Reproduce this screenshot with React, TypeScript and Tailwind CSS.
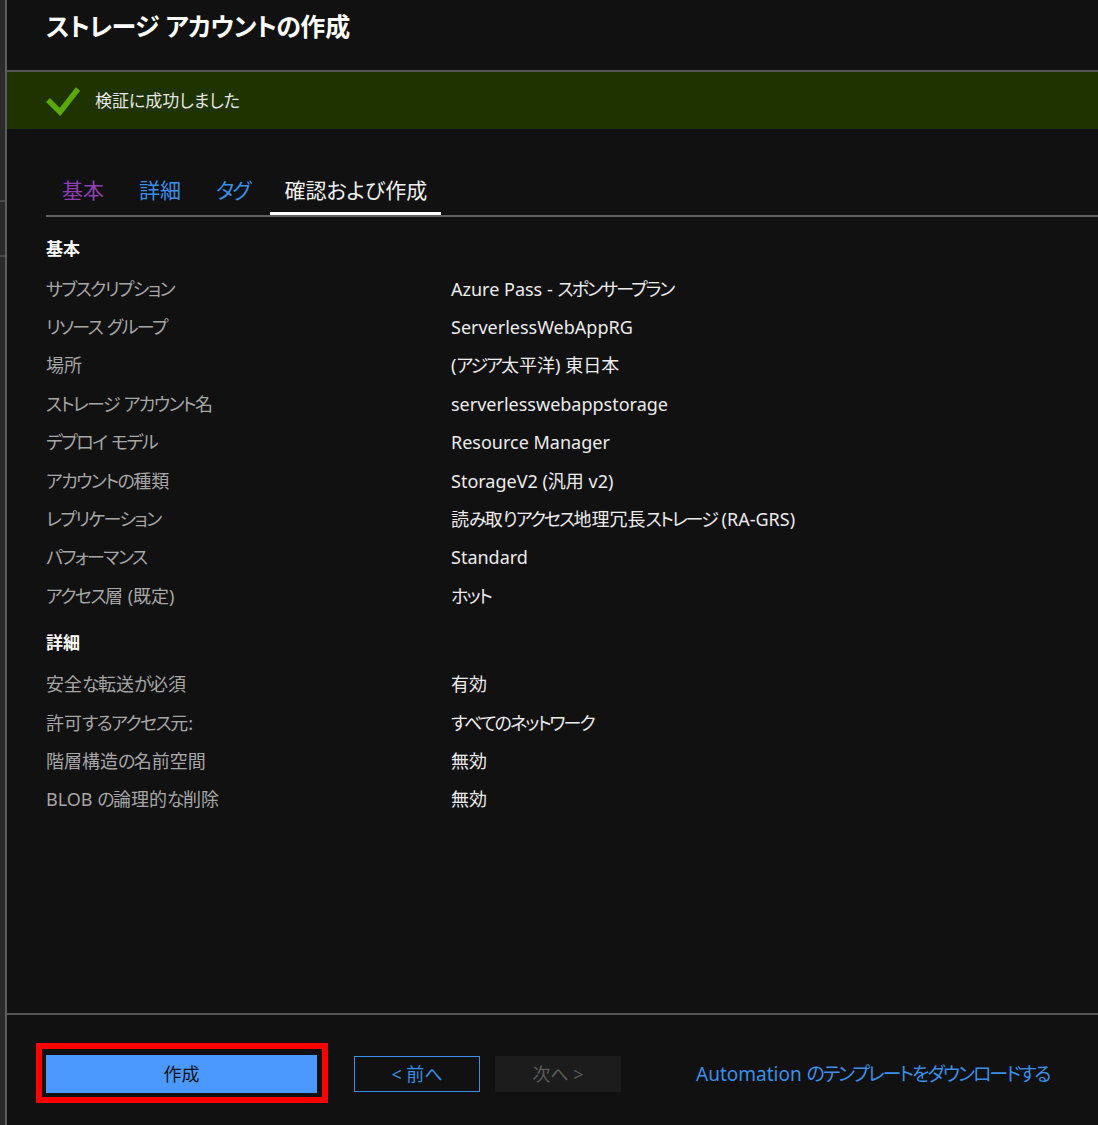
import React from "react";

const basic: [string, string][] = [
  ["サブスクリプション", "Azure Pass - スポンサープラン"],
  ["リソース グループ", "ServerlessWebAppRG"],
  ["場所", "(アジア太平洋) 東日本"],
  ["ストレージ アカウント名", "serverlesswebappstorage"],
  ["デプロイ モデル", "Resource Manager"],
  ["アカウントの種類", "StorageV2 (汎用 v2)"],
  ["レプリケーション", "読み取りアクセス地理冗長ストレージ (RA-GRS)"],
  ["パフォーマンス", "Standard"],
  ["アクセス層 (既定)", "ホット"],
];

const details: [string, string][] = [
  ["安全な転送が必須", "有効"],
  ["許可するアクセス元:", "すべてのネットワーク"],
  ["階層構造の名前空間", "無効"],
  ["BLOB の論理的な削除", "無効"],
];

function Kana({ text, cls }: { text: string; cls: string }) {
  const parts = text.split(/([\u3040-\u30ff]+)/);
  return (
    <>
      {parts.map((p, i) =>
        /[\u3040-\u30ff]/.test(p) ? (
          <span key={i} className={cls}>
            {p}
          </span>
        ) : (
          <React.Fragment key={i}>{p}</React.Fragment>
        )
      )}
    </>
  );
}

function Rows({ rows }: { rows: [string, string][] }) {
  return (
    <div className="flex flex-col">
      {rows.map(([k, v]) => (
        <div key={k} className="grid h-[38.4px] grid-cols-[405px_1fr] items-center text-[18px]">
          <div className="text-[#a6a6a6]">
            <Kana text={k} cls="tracking-[-1.6px]" />
          </div>
          <div className="text-[#ececec]">
            <Kana text={v} cls="tracking-[-1.9px]" />
          </div>
        </div>
      ))}
    </div>
  );
}

export default function App() {
  return (
    <div className="flex h-[1125px] w-[1098px] overflow-hidden bg-[#111111] font-['Noto_Sans','Noto_Sans_CJK_JP',sans-serif] [font-feature-settings:'palt']">
      {/* left strip */}
      <div className="flex w-[5px] shrink-0 flex-col bg-[#2a2a2a]">
        <div className="h-[200px]" />
        <div className="h-[2px] bg-[#4a4a4a]" />
        <div className="h-[53px]" />
        <div className="h-[2px] bg-[#4a4a4a]" />
      </div>
      <div className="w-[2px] shrink-0 bg-[#5c5c5c]" />

      {/* main */}
      <div className="flex min-w-0 flex-1 flex-col">
        <div className="flex h-[70px] shrink-0 items-start pl-[39px] pt-[8px]">
          <h1 className="text-[25px] font-bold leading-[36px] text-white">
            <Kana text="ストレージ アカウントの作成" cls="tracking-[-0.6px]" />
          </h1>
        </div>
        <div className="h-[2px] shrink-0 bg-[#555555]" />
        <div className="flex h-[57px] shrink-0 items-center bg-[#1e3300] pl-[39px]">
          <svg width="34" height="30" viewBox="0 0 34 30" className="mr-[15px]">
            <polyline points="2,14 14,26 32,3" fill="none" stroke="#5aa800" strokeWidth="5.5" strokeLinecap="butt" strokeLinejoin="miter" />
          </svg>
          <span className="text-[17px] text-[#e6e6e6]">検証に成功しました</span>
        </div>

        {/* tabs */}
        <div className="ml-[39px] mt-[46px] flex shrink-0 gap-[7px] border-b-[2px] border-[#5f5f5f] pl-[2px]">
          <div className="px-[14px] pb-[10px] text-[21px] leading-[30px] text-[#8c3fb0]">基本</div>
          <div className="px-[14px] pb-[10px] text-[21px] leading-[30px] text-[#3c8fe6]">詳細</div>
          <div className="px-[14px] pb-[10px] text-[21px] leading-[30px] tracking-[-2px] text-[#3c8fe6]">タグ</div>
          <div className="border-b-[3px] border-white px-[14px] pb-[7px] text-[21px] leading-[30px] text-[#f0f0f0]">
            確認および作成
          </div>
        </div>

        {/* content */}
        <div className="flex flex-1 flex-col pl-[39px]">
          <div className="mt-[16px] flex h-[32px] items-center text-[17px] font-bold text-white">基本</div>
          <div className="mt-[5px]">
            <Rows rows={basic} />
          </div>
          <div className="mt-[11px] flex h-[32px] items-center text-[17px] font-bold text-white">詳細</div>
          <div className="mt-[7px]">
            <Rows rows={details} />
          </div>
        </div>

        {/* footer */}
        <div className="h-[2px] shrink-0 bg-[#555555]" />
        <div className="flex h-[110px] shrink-0 items-start pl-[29px] pt-[28px]">
          <div className="border-[6px] border-[#ff0000] pb-[4px] pl-[4px] pr-[5px] pt-[6px]">
            <button className="flex h-[38px] w-[271px] items-center justify-center bg-[#4b98ff] text-[18px] text-[#141414]">
              作成
            </button>
          </div>
          <button className="ml-[26px] mt-[13px] flex h-[36px] w-[126px] items-center justify-center border border-[#3c8fe6] text-[18px] text-[#3c8fe6]">
            &lt;&nbsp;前へ
          </button>
          <button className="ml-[15px] mt-[13px] flex h-[36px] w-[126px] items-center justify-center bg-[#1c1c1c] text-[18px] text-[#5a5a5a]">
            次へ&nbsp;&gt;
          </button>
          <a className="ml-[75px] mt-[17px] text-[19px] leading-[28px] text-[#3c8fe6]">
            <Kana text="Automation のテンプレートをダウンロードする" cls="tracking-[-2px]" />
          </a>
        </div>
      </div>
    </div>
  );
}
